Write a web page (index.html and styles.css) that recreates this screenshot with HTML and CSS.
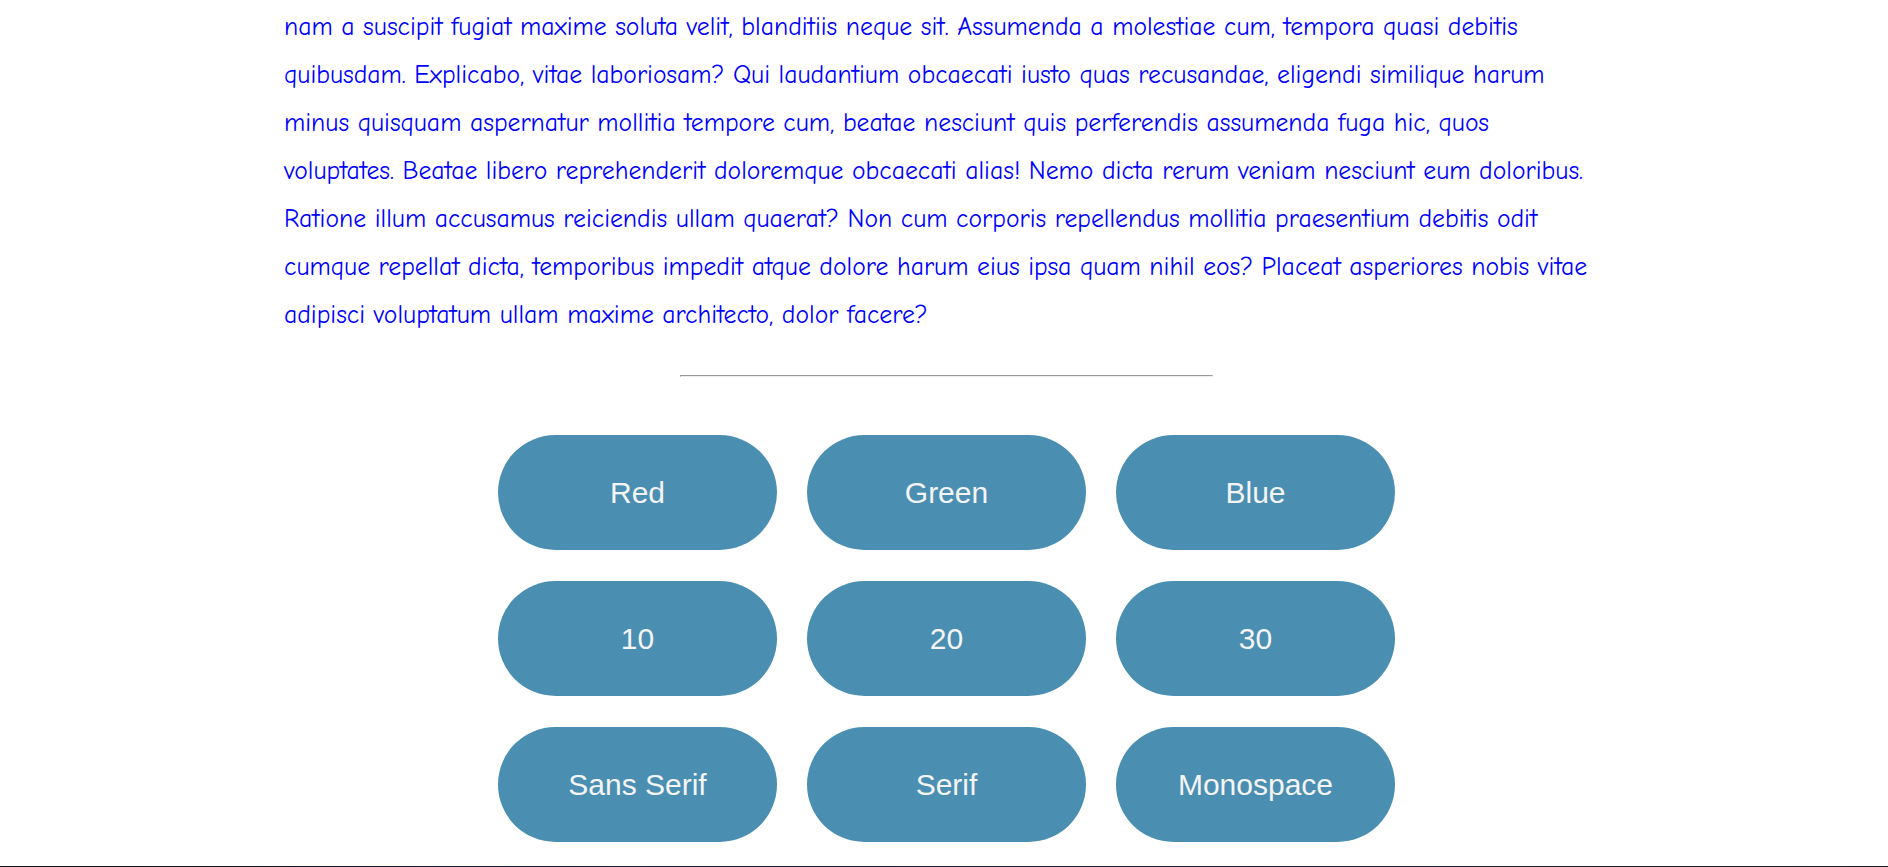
FILE: index.html
```html
<!DOCTYPE html>
<html lang="en">
<head>
<meta charset="utf-8">
<title>Text Styler</title>
<link rel="stylesheet" href="styles.css">
</head>
<body>
<main class="page">
  <p class="text">nam a suscipit fugiat maxime soluta velit, blanditiis neque sit. Assumenda a molestiae cum, tempora quasi debitis quibusdam. Explicabo, vitae laboriosam? Qui laudantium obcaecati iusto quas recusandae, eligendi similique harum minus quisquam aspernatur mollitia tempore cum, beatae nesciunt quis perferendis assumenda fuga hic, quos voluptates. Beatae libero reprehenderit doloremque obcaecati alias! Nemo dicta rerum veniam nesciunt eum doloribus. Ratione illum accusamus reiciendis ullam quaerat? Non cum corporis repellendus mollitia praesentium debitis odit cumque repellat dicta, temporibus impedit atque dolore harum eius ipsa quam nihil eos? Placeat asperiores nobis vitae adipisci voluptatum ullam maxime architecto, dolor facere?</p>
  <hr class="divider">
  <div class="buttons">
    <button class="btn">Red</button>
    <button class="btn">Green</button>
    <button class="btn">Blue</button>
    <button class="btn">10</button>
    <button class="btn">20</button>
    <button class="btn">30</button>
    <button class="btn">Sans Serif</button>
    <button class="btn">Serif</button>
    <button class="btn">Monospace</button>
  </div>
</main>
<footer class="footer"></footer>
</body>
</html>
```
FILE: styles.css
```css
html, body {
  margin: 0;
  padding: 0;
  background: #ffffff;
}

.page {
  width: 1320px;
  margin: 0 auto;
  padding-top: 3px;
}

.text {
  margin: 0;
  color: #0000ff;
  font-family: "Comic Sans MS", "Comic Neue", "Open Sans", sans-serif;
  font-size: 25.7px;
  line-height: 48px;
}

.divider {
  width: 531px;
  margin: 36px 0 0 396px;
}

.buttons {
  display: grid;
  grid-template-columns: repeat(3, 279px);
  grid-auto-rows: 115px;
  gap: 31px 30px;
  margin: 58px 0 0 214px;
}

.btn {
  border: none;
  border-radius: 58px;
  background: #4a8fb1;
  color: #f4f4f4;
  font-family: "Liberation Sans", Arial, sans-serif;
  font-size: 30px;
  padding: 0;
  cursor: pointer;
}

.footer {
  margin-top: 24px;
  height: 120px;
  background: linear-gradient(90deg, #111418 0%, #121d45 35%, #1a1c28 100%);
}
```
